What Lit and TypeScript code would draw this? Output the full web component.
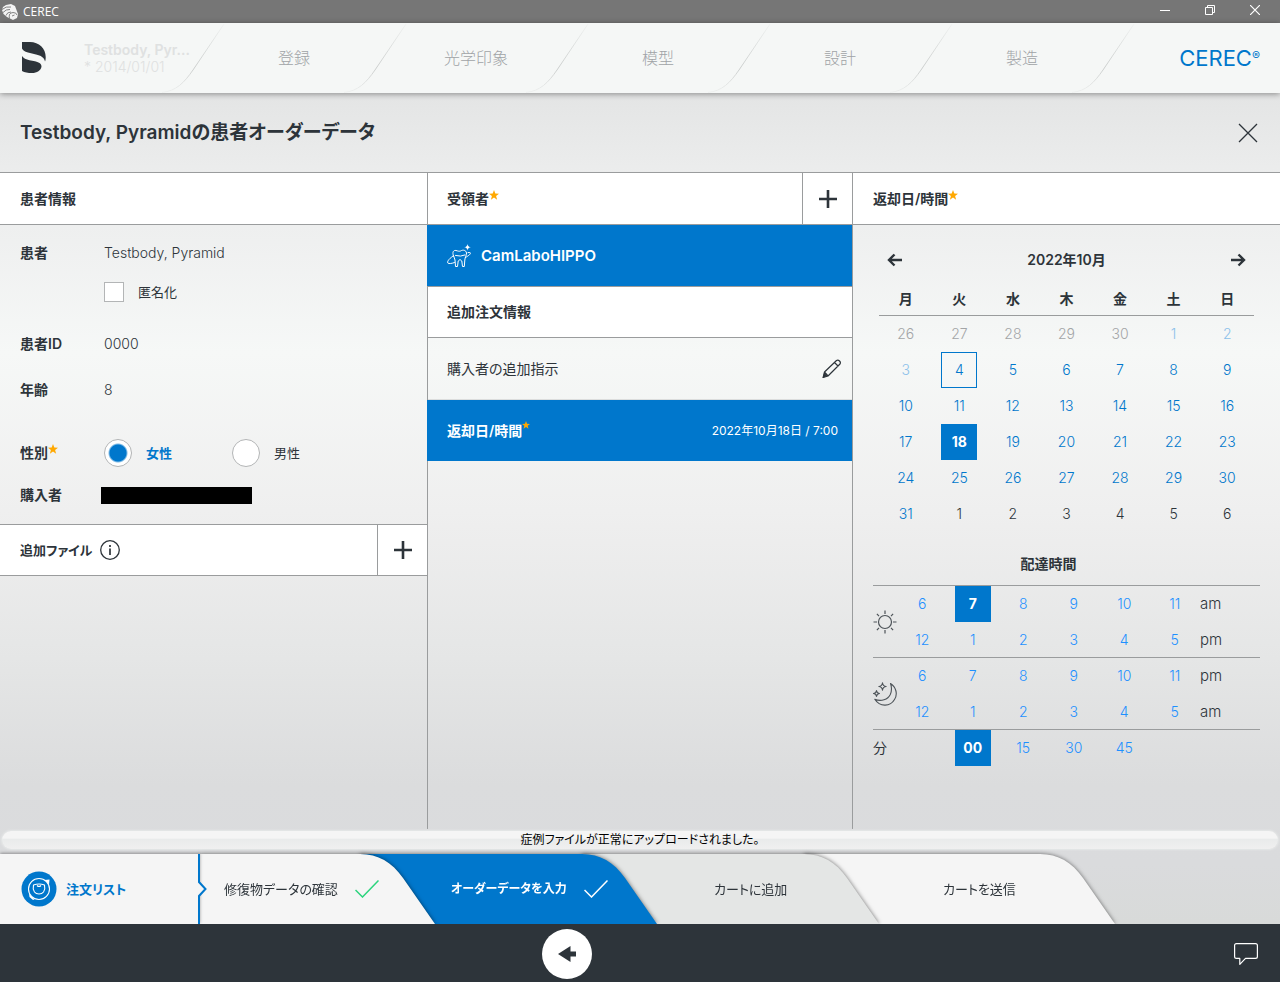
import { LitElement, html, css, svg } from "lit";
import { customElement, state, property } from "lit/decorators.js";
import { classMap } from "lit/directives/class-map.js";

const base = css`
  * {
    box-sizing: border-box;
  }
  button {
    font: inherit;
    color: inherit;
    background: none;
    border: 0;
    padding: 0;
    margin: 0;
    cursor: pointer;
  }
  svg {
    display: block;
    flex: none;
  }
`;

const star = (size: number) => html`<svg class="star" width=${size} height=${size} viewBox="0 0 10 10" aria-label="必須">
  <path fill="#ffa800" d="M5 0 6.3 3.5 10 3.7 7.1 6 8.1 9.7 5 7.6 1.9 9.7 2.9 6 0 3.7 3.7 3.5Z" />
</svg>`;

const plus = html`<svg width="18" height="18" viewBox="0 0 18 18" stroke="#2d343a" stroke-width="2.600" fill="none">
  <path d="M9 0V18M0 9H18" />
</svg>`;

const check = (color: string) => html`<svg width="24" height="18" viewBox="0 0 24 18" fill="none" stroke=${color} stroke-width="1.5">
  <path d="M.5 10 7.5 17 23.5 .5" />
</svg>`;

@customElement("delivery-calendar")
export class DeliveryCalendar extends LitElement {
  static styles = [
    base,
    css`
      :host {
        display: block;
        padding: 17px 26px 0;
      }
      .head {
        display: flex;
        align-items: center;
        justify-content: space-between;
        height: 36px;
        padding: 0 8px;
        font-weight: 600;
      }
      table {
        width: 100%;
        table-layout: fixed;
        border-collapse: separate;
        border-spacing: 0;
      }
      th {
        height: 38px;
        padding: 4px 0 0;
        font-weight: 600;
        border-bottom: 1px solid #9a9c9d;
      }
      td {
        height: 36px;
        padding: 0;
        text-align: center;
      }
      .day {
        width: 36px;
        height: 36px;
        display: block;
        margin: 0 auto;
        font-size: 14px;
        font-weight: 300;
        color: #0077cc;
      }
      .out {
        color: #a3a5a7;
      }
      .past {
        color: #8cc1ea;
      }
      .next {
        color: #2d343a;
      }
      .today {
        border: 1px solid #0077cc;
      }
      .sel {
        background: #0077cc;
        color: #fff;
        font-weight: 700;
      }
    `,
  ];

  @state() private selected = 18;

  private cell(index: number) {
    const offset = index - 4;
    const n = offset < 1 ? offset + 30 : offset > 31 ? offset - 31 : offset;
    const inMonth = offset >= 1 && offset <= 31;
    const cls = {
      day: true,
      out: offset < 1,
      past: inMonth && offset < 4,
      next: offset > 31,
      today: offset === 4,
      sel: inMonth && offset === this.selected,
    };
    return html`<td>
      <button class=${classMap(cls)} @click=${() => inMonth && offset > 3 && (this.selected = offset)}>${n}</button>
    </td>`;
  }

  render() {
    return html`
      <div class="head">
        <button aria-label="前の月">
          <svg width="16" height="14" viewBox="0 0 16 14" fill="none" stroke="#2d343a" stroke-width="2.400"><path d="M15 7H2.500M7.500 1.500 2 7 7.500 12.500" /></svg>
        </button>
        <span>2022年10月</span>
        <button aria-label="次の月">
          <svg width="16" height="14" viewBox="0 0 16 14" fill="none" stroke="#2d343a" stroke-width="2.400"><path d="M1 7H13.500M8.500 1.500 14 7 8.500 12.500" /></svg>
        </button>
      </div>
      <table>
        <thead>
          <tr>
            ${["月", "火", "水", "木", "金", "土", "日"].map((d) => html`<th scope="col">${d}</th>`)}
          </tr>
        </thead>
        <tbody>
          ${[0, 1, 2, 3, 4, 5].map((w) => html`<tr>${[0, 1, 2, 3, 4, 5, 6].map((d) => this.cell(w * 7 + d))}</tr>`)}
        </tbody>
      </table>
    `;
  }
}

const sun = html`<svg width="24" height="24" viewBox="0 0 24 24" fill="none" stroke="#4d5358" stroke-width="1.2">
  <circle cx="12" cy="12" r="6.500" />
  <path d="M12 .5V4M12 20V23.500M.5 12H4M20 12H23.500M3.900 3.900 6 6.200M18 17.800 20.100 20.100M3.900 20.100 6 17.800M18 6.200 20.100 3.900" />
</svg>`;

const moon = html`<svg width="24" height="24" viewBox="0 0 24 24" fill="none" stroke="#4d5358" stroke-width="1.1" stroke-linejoin="round">
  <path d="M17.500 1.500C23 5 25 12 21.500 17.500 17.500 24.500 7 25.500 1.800 17.200 8 20 15 17.500 17.300 12.500 19 8.500 18.800 5 17.500 1.500Z" />
  <path d="M9.500 .8Q9.800 4.200 13.200 4.500 9.800 4.800 9.500 8.200 9.200 4.800 5.800 4.500 9.200 4.200 9.500 .8ZM3.500 8.500Q3.800 11.200 6.500 11.500 3.800 11.800 3.500 14.500 3.200 11.800 .5 11.500 3.200 11.200 3.500 8.500Z" />
</svg>`;

@customElement("delivery-time")
export class DeliveryTime extends LitElement {
  static styles = [
    base,
    css`
      :host {
        display: block;
        padding: 0 20px;
      }
      h3 {
        margin: 0;
        height: 54px;
        display: flex;
        align-items: flex-end;
        justify-content: center;
        padding: 0 36px 12px 0;
        font-size: 14px;
        font-weight: 600;
        line-height: 20px;
      }
      .block {
        display: grid;
        grid-template-columns: 24px 1fr;
        align-items: center;
        box-shadow: 0 -1px #9a9c9d;
      }
      .row {
        display: grid;
        grid-template-columns: repeat(6, 1fr) 60px;
        align-items: center;
        justify-items: center;
        height: 36px;
      }
      .slot {
        width: 36px;
        height: 36px;
        font-size: 14px;
        font-weight: 300;
        color: #1e90ff;
      }
      .sel {
        background: #0077cc;
        color: #fff;
        font-weight: 700;
      }
      .half {
        justify-self: start;
        font-size: 15px;
        font-weight: 300;
      }
    `,
  ];

  @state() private hour = "7am";
  @state() private minute = "00";

  private row(hours: number[], half: string, period: string) {
    return html`<div class="row">
      ${hours.map((h) => {
        const key = `${h}${period}`;
        return html`<button class=${classMap({ slot: true, sel: key === this.hour })} @click=${() => (this.hour = key)}>${h}</button>`;
      })}
      <span class="half">${half}</span>
    </div>`;
  }

  render() {
    const early = [6, 7, 8, 9, 10, 11];
    const late = [12, 1, 2, 3, 4, 5];
    return html`
      <h3>配達時間</h3>
      <div class="block">${sun}<div>${this.row(early, "am", "am")}${this.row(late, "pm", "pm")}</div></div>
      <div class="block">${moon}<div>${this.row(early, "pm", "pm")}${this.row(late, "am", "am")}</div></div>
      <div class="block">
        <span>分</span>
        <div class="row">
          <span></span>
          ${["00", "15", "30", "45"].map(
            (m) => html`<button class=${classMap({ slot: true, sel: m === this.minute })} @click=${() => (this.minute = m)}>${m}</button>`,
          )}
        </div>
      </div>
    `;
  }
}

@customElement("step-tab")
export class StepTab extends LitElement {
  static styles = [
    base,
    css`
      :host {
        display: block;
        position: relative;
        --fill: #f5f5f5;
        filter: drop-shadow(0 0 2px rgba(0, 0, 0, 0.55));
      }
      .fill,
      .cap {
        position: absolute;
        top: 0;
        bottom: 0;
      }
      .fill {
        left: 0;
        right: 74px;
        background: var(--fill);
      }
      .cap {
        right: 0;
      }
      .cap path {
        fill: var(--fill);
      }
      button {
        position: relative;
        display: flex;
        align-items: center;
        gap: 17px;
        width: 100%;
        height: 70px;
        padding-left: var(--inset);
        white-space: nowrap;
      }
    `,
  ];

  @property() label = "";
  @property() tick = "";

  render() {
    return html`
      <div class="fill"></div>
      <svg class="cap" width="75" height="70" viewBox="0 0 75 70"><path d="M0 0C18 0 32 8 43 24L75 70H0Z" /></svg>
      <button>${this.label}${this.tick ? check(this.tick) : ""}</button>
    `;
  }
}

@customElement("app-root")
export class AppRoot extends LitElement {
  static styles = [
    base,
    css`
      :host {
        display: flex;
        flex-direction: column;
        min-height: 100vh;
        font-family: Inter, "Noto Sans CJK JP", sans-serif;
        font-feature-settings: "palt";
        font-size: 14px;
        line-height: 20px;
        color: #2d343a;
        background: linear-gradient(#e3e4e4 9%, #ebecec 17%, #eeefef 23%, #f6f8f7 36%, #efefef 52%, #e5e6e6 67%, #dbdcdd 80%, #dadbdd 88%, #d8dad9 94%);
      }
      .titlebar {
        display: flex;
        align-items: center;
        height: 23px;
        padding: 0 20px 0 2px;
        gap: 5px;
        background: #767676;
        color: #fff;
        font: 12px/16px "Open Sans", sans-serif;
      }
      .titlebar .name {
        flex: 1;
      }
      .winbtns {
        display: flex;
        gap: 35px;
        padding-bottom: 3px;
      }
      .nav {
        display: grid;
        grid-template-columns: 226px repeat(5, 1fr) 144px;
        height: 70px;
        background: #f5f7f6;
        box-shadow: 0 1px 6px rgba(0, 0, 0, 0.4);
      }
      .patient {
        display: flex;
        align-items: center;
        padding-left: 21px;
      }
      .who {
        width: 115px;
        margin-left: 37px;
        font-size: 14px;
        font-weight: 300;
        line-height: 17px;
        color: #dfe1e1;
        white-space: nowrap;
      }
      .who b {
        display: block;
        font-weight: 600;
      }
      .who + .curve {
        margin-left: -37px;
      }
      .step {
        display: flex;
        align-items: center;
        padding-left: 18px;
      }
      .step button {
        flex: 1;
        font-size: 16px;
        font-weight: 300;
        color: #a0a3a6;
      }
      .brand {
        display: flex;
        align-items: center;
        justify-content: flex-end;
        padding-right: 20px;
        font-size: 22px;
        color: #0077cc;
      }
      .brand sup {
        font-size: 12px;
        line-height: 12px;
        vertical-align: 6px;
      }
      .heading {
        display: flex;
        align-items: center;
        justify-content: space-between;
        height: 79px;
        padding: 0 22px 0 20px;
      }
      h1 {
        margin: 0;
        font-size: 19px;
        font-weight: 600;
        line-height: 28px;
      }
      .panels {
        flex: 1;
        display: grid;
        grid-template-columns: 427fr 425fr 428fr;
        border-top: 1px solid #9a9c9d;
      }
      .col + .col {
        border-left: 1px solid #9a9c9d;
      }
      .bar {
        display: flex;
        align-items: center;
        justify-content: space-between;
        height: 51px;
        padding-left: 20px;
        background: #fff;
        border-bottom: 1px solid #9a9c9d;
      }
      .bar.top {
        height: 52px;
      }
      h2 {
        display: flex;
        align-items: center;
        gap: 8px;
        margin: 0;
        font-size: 14px;
        font-weight: 600;
      }
      h2.files {
        font-size: 13px;
      }
      h2.req,
      .req {
        display: flex;
        gap: 0;
      }
      .star {
        margin-bottom: 8px;
      }
      .add {
        display: grid;
        place-items: center;
        width: 50px;
        height: 100%;
        border-left: 1px solid #9a9c9d;
      }
      .fields {
        display: grid;
        grid-template-columns: 84px 1fr;
        grid-template-rows: 56px 22px 18px 46px 46px 19px 42px 42px;
        align-items: center;
        padding: 0 20px 8px;
        border-bottom: 1px solid #9a9c9d;
      }
      .label {
        grid-column: 1;
        font-weight: 600;
      }
      .label.req {
        align-items: center;
      }
      .value {
        grid-column: 2;
        font-weight: 300;
      }
      .anon {
        grid-row: 2;
      }
      .r4 {
        grid-row: 4;
      }
      .r5 {
        grid-row: 5;
      }
      .r7 {
        grid-row: 7;
      }
      .r8 {
        grid-row: 8;
      }
      .choice {
        display: flex;
        align-items: center;
        gap: 14px;
        font-size: 13px;
        font-weight: 400;
      }
      .choices {
        display: grid;
        grid-template-columns: 128px 128px;
      }
      input {
        appearance: none;
        margin: 0;
        background: #fff;
        border: 1px solid #b3b5b6;
      }
      input[type="checkbox"] {
        width: 20px;
        height: 20px;
      }
      input[type="radio"] {
        width: 28px;
        height: 28px;
        border-radius: 50%;
      }
      input[type="radio"]:checked {
        background: radial-gradient(circle, #0077cc 8px, #fff 10px);
      }
      input:checked + span {
        color: #0077cc;
        font-weight: 600;
      }
      .redacted {
        width: 151px;
        height: 17px;
        margin-left: -3px;
        background: #000;
      }
      .item {
        display: flex;
        align-items: center;
        justify-content: space-between;
        width: 100%;
        height: 62px;
        padding: 0 10px 0 19px;
        border-bottom: 1px solid #dcdddd;
      }
      .item.on {
        width: calc(100% + 1px);
        height: 61px;
        margin-left: -1px;
        padding: 0 14px 0 20px;
        border: 0;
        background: #0077cc;
        color: #fff;
        font-weight: 600;
      }
      .item.lab {
        justify-content: flex-start;
        gap: 10px;
        font-size: 15px;
      }
      .item .when {
        font-size: 12px;
        font-weight: 400;
      }
      .col2 .bar {
        padding-left: 19px;
      }
      .item + .bar {
        height: 52px;
        border-top: 1px solid #9a9c9d;
      }
      .status {
        height: 18px;
        margin: 2px 2px 5px;
        border-radius: 9px;
        background: linear-gradient(#f5f5f5 40%, #e9ebeb 45%, #f0f0f0);
        box-shadow: 0 0 2px 1px #e6e8e8;
        color: #000;
        font-size: 12px;
        text-align: center;
        line-height: 18px;
      }
      .tabs {
        display: flex;
        height: 70px;
        padding-right: 165px;
      }
      .orders {
        position: relative;
        z-index: 6;
        display: flex;
        align-items: center;
        gap: 9px;
        width: 200px;
        padding-left: 21px;
        background: #f5f5f5;
        border-right: 2px solid #0077cc;
        box-shadow: 0 -1px 3px rgba(0, 0, 0, 0.35);
        color: #0077cc;
        font-size: 13px;
        font-weight: 600;
      }
      .notch {
        position: absolute;
        left: 196px;
        top: 26px;
      }
      step-tab {
        font-size: 13px;
      }
      step-tab + step-tab {
        margin-left: -75px;
      }
      .t1 {
        flex: 235 1 0;
        z-index: 5;
        --inset: 24px;
      }
      .t2 {
        flex: 297 1 0;
        z-index: 4;
        --fill: #0077cc;
        --inset: 91px;
        color: #fff;
        font-size: 12px;
        font-weight: 700;
      }
      .t3 {
        flex: 297 1 0;
        z-index: 3;
        --fill: #e4e6e5;
        --inset: 132px;
      }
      .t4 {
        flex: 311 1 0;
        z-index: 2;
        --inset: 139px;
      }
      .footer {
        position: relative;
        z-index: 7;
        display: grid;
        grid-template-columns: 542fr 50px 688fr;
        align-items: center;
        height: 58px;
        padding-top: 2px;
        background: #2d343a;
      }
      .back {
        grid-column: 2;
        display: grid;
        place-items: center;
        width: 50px;
        height: 50px;
        border-radius: 50%;
        background: #fff;
      }
      .chat {
        justify-self: end;
        margin-right: 22px;
      }
    `,
  ];

  private curve(id: string) {
    return html`<svg class="curve" width="64" height="70" viewBox="0 0 64 70" fill="none">
      <defs>
        <linearGradient id=${id} x1="0" y1="1" x2="0" y2="0">
          <stop offset="0" stop-color="#eff1f0" />
          <stop offset=".35" stop-color="#cbcecd" />
          <stop offset="1" stop-color="#f0f2f1" />
        </linearGradient>
      </defs>
      ${svg`<path stroke=${`url(#${id})`} d="M0 69.500C14 68 22 60 31 47L62 1" />`}
    </svg>`;
  }

  render() {
    return html`
      <div class="titlebar">
        <svg width="16" height="16" viewBox="0 0 16 16">
          <path fill="#f4f4f4" d="M1 3 4 1 9 0 13 2 14.500 6 16 10 15 14 11 16 8 14.500 5 13 1.500 10 0 6Z" />
          <path fill="none" stroke="#767676" stroke-width=".9" d="M0 5.500Q4 2 9 3M1 8.500Q4 5 8 5.500M4 11.500Q5 8 9 8M7.500 14.500Q6 9 11 8.500 14.500 8.500 15 11M10 12 12.500 11" />
        </svg>
        <span class="name">CEREC</span>
        <div class="winbtns">
          <button aria-label="最小化"><svg width="10" height="10" viewBox="0 0 10 10" stroke="#fff"><path d="M0 5.500H10" /></svg></button>
          <button aria-label="元に戻す">
            <svg width="10" height="10" viewBox="0 0 10 10" fill="none" stroke="#fff"><path d="M.5 2.500H7.500V9.500H.5ZM2.500 2.500V.5H9.500V7.500H7.500" /></svg>
          </button>
          <button aria-label="閉じる"><svg width="10" height="10" viewBox="0 0 10 10" stroke="#fff" stroke-width="1.2"><path d="M0 0 10 10M10 0 0 10" /></svg></button>
        </div>
      </div>

      <nav class="nav">
        <div class="patient">
          <svg width="26" height="32" viewBox="0 0 26 32" fill="#2d343a">
            <path d="M1 0H9C18 0 24.700 6.500 24.700 15 24.700 17 24.500 18.500 24 19.500 23 15.500 20 13.500 15 12.500L7 10.500C3.500 9.500 1.500 8 1 6.500Z" />
            <path d="M1 14C2.500 16.500 5 17.500 8.500 18.200L14 19.300C18.500 20.300 20.500 22 20.500 24.500 20 28.500 16 31 11 31 7 31 3.500 30.500 1 29Z" />
          </svg>
          <div class="who"><b>Testbody, Pyr...</b>* 2014/01/01</div>
          ${this.curve("g0")}
        </div>
        ${["登録", "光学印象", "模型", "設計", "製造"].map(
          (s, i) => html`<div class="step"><button>${s}</button>${this.curve(`g${i + 1}`)}</div>`,
        )}
        <div class="brand"><span>CEREC<sup>®</sup></span></div>
      </nav>

      <header class="heading">
        <h1>Testbody, Pyramidの患者オーダーデータ</h1>
        <button aria-label="閉じる">
          <svg width="20" height="20" viewBox="0 0 20 20" stroke="#2d343a" stroke-width="1.3"><path d="M1 1 19 19M19 1 1 19" /></svg>
        </button>
      </header>

      <main class="panels">
        <section class="col">
          <div class="bar top"><h2>患者情報</h2></div>
          <div class="fields">
            <span class="label">患者</span><span class="value">Testbody, Pyramid</span>
            <label class="value choice anon"><input type="checkbox" /><span>匿名化</span></label>
            <span class="label r4">患者ID</span><span class="value r4">0000</span>
            <span class="label r5">年齢</span><span class="value r5">8</span>
            <span class="label req r7">性別${star(10)}</span>
            <div class="value choices r7" role="radiogroup" aria-label="性別">
              <label class="choice"><input type="radio" name="sex" checked /><span>女性</span></label>
              <label class="choice"><input type="radio" name="sex" /><span>男性</span></label>
            </div>
            <span class="label r8">購入者</span>
            <div class="value r8"><div class="redacted"></div></div>
          </div>
          <div class="bar">
            <h2 class="files">
              追加ファイル
              <svg width="20" height="20" viewBox="0 0 20 20" fill="none" stroke="#2d343a">
                <circle cx="10" cy="10" r="9.300" stroke-width="1.3" />
                <path d="M10 5V7M10 8.500V15" stroke-width="1.7" />
              </svg>
            </h2>
            <button class="add" aria-label="ファイルを追加">${plus}</button>
          </div>
        </section>

        <section class="col col2">
          <div class="bar top">
            <h2 class="req">受領者${star(10)}</h2>
            <button class="add" aria-label="受領者を追加">${plus}</button>
          </div>
          <button class="item on lab">
            <svg width="24" height="24" viewBox="0 0 24 24" fill="none" stroke="#fff" stroke-linejoin="round" stroke-linecap="round">
              <path d="M6.500 12C5 8 6.500 6 9 6.500 11 7 12 7.500 13.500 7 16 5.500 19 6 19.500 9 19.800 11 18 13 17.800 16L17.300 22.500H15.500L14.800 17Q13 14 11.200 17L10.500 22.500H8.500L8 16C7.800 14.500 7 13.500 6.500 12Z" />
              <path d="M5.500 12.500C1.500 15 0 18 .8 19 2 20 5 19.500 7.500 18.500M18.500 13.500C22 11.500 24 9.800 23.300 8.800 22.800 8.300 21.500 8.500 21 8.600M8.500 11.500Q14 13 18 11" />
              <path fill="#fff" stroke="none" d="M20.500 0Q20.800 3 24 3.300 20.800 3.600 20.500 6.600 20.200 3.600 17.200 3.300 20.200 3 20.500 0Z" />
            </svg>
            CamLaboHIPPO
          </button>
          <div class="bar"><h2>追加注文情報</h2></div>
          <button class="item">
            購入者の追加指示
            <svg width="20" height="20" viewBox="0 0 20 20" fill="none" stroke="#2d343a" stroke-width="1.2" stroke-linejoin="round">
              <path d="M2.500 13 14.500 1.500Q16 .5 17.500 2 19 3.500 18 5L6 17 1.200 18.500ZM12.500 3.500 16 7M2.500 13 6 17" />
              <path fill="#2d343a" stroke="none" d="M2.200 13.500 5.500 17 .5 19Z" />
            </svg>
          </button>
          <button class="item on">
            <span class="req">返却日/時間${star(8)}</span>
            <span class="when">2022年10月18日 / 7:00</span>
          </button>
        </section>

        <section class="col">
          <div class="bar top"><h2 class="req">返却日/時間${star(10)}</h2></div>
          <delivery-calendar></delivery-calendar>
          <delivery-time></delivery-time>
        </section>
      </main>

      <div class="status" role="status">症例ファイルが正常にアップロードされました。</div>

      <div class="tabs">
        <button class="orders">
          <svg width="36" height="36" viewBox="0 0 36 36" fill="none" stroke="#fff">
            <circle cx="18" cy="18" r="17.500" fill="#0077cc" stroke="none" />
            <circle cx="18" cy="18" r="10.500" stroke-width="1.1" />
            <path stroke-width="1.1" stroke-linejoin="round" d="M12.500 14Q18 12 23.500 14 24.500 18 22.500 21 21 23 18 23 15 23 13.500 21 11.500 18 12.500 14ZM16 14.500Q18 16.500 20 14.500" />
            <path fill="#fff" stroke="none" d="M23.500 9 28.500 8.500 28 13.500ZM8 22.500 13.500 28.500 12 29 8.500 26Z" />
          </svg>
          注文リスト
          <svg class="notch" width="12" height="18" viewBox="0 0 12 18"><path fill="#f5f5f5" d="M0 1H2L9.500 9 2 17H0Z" /><path fill="none" stroke="#0077cc" stroke-width="2" d="M3 0V2L9.500 9 3 16V18" /></svg>
        </button>
        <step-tab class="t1" label="修復物データの確認" tick="#2bd47d"></step-tab>
        <step-tab class="t2" label="オーダーデータを入力" tick="#ffffff"></step-tab>
        <step-tab class="t3" label="カートに追加"></step-tab>
        <step-tab class="t4" label="カートを送信"></step-tab>
      </div>

      <footer class="footer">
        <button class="back" aria-label="戻る">
          <svg width="18" height="16" viewBox="0 0 18 16" fill="#2d343a"><path d="M0 8 12.500 0V5.500H18V10.500H12.500V16Z" /></svg>
        </button>
        <button class="chat" aria-label="メッセージ">
          <svg width="24" height="22" viewBox="0 0 24 22" fill="none" stroke="#fff" stroke-width="1.2" stroke-linejoin="round">
            <path d="M2.500 .6H21.500Q23.400 .6 23.400 2.500V13.500Q23.400 15.400 21.500 15.400H11.500L5.800 21.300V15.400H2.500Q.6 15.400 .6 13.500V2.500Q.6 .6 2.500 .6Z" />
          </svg>
        </button>
      </footer>
    `;
  }
}
